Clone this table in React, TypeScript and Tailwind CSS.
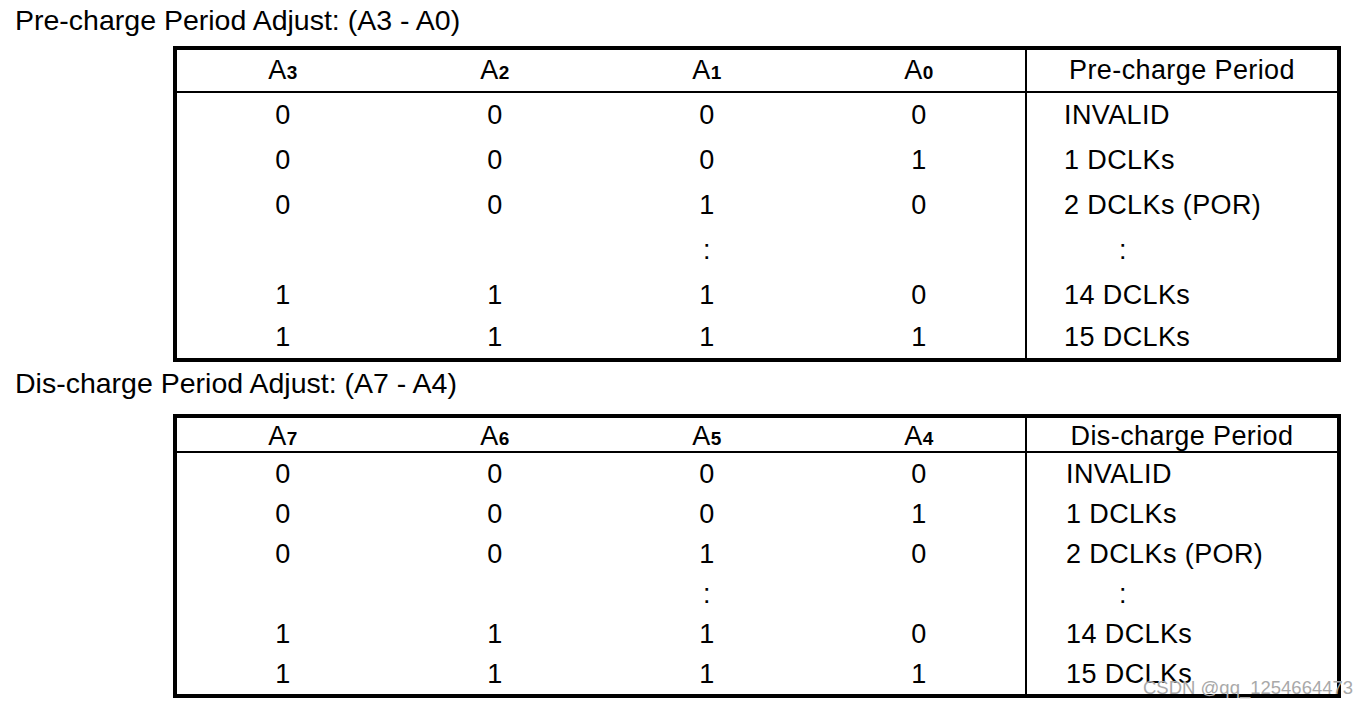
const font = { fontFamily: '"Liberation Sans", Arial, sans-serif' }

type Row = string[]

const rows: Row[] = [
  ['0', '0', '0', '0', 'INVALID'],
  ['0', '0', '0', '1', '1 DCLKs'],
  ['0', '0', '1', '0', '2 DCLKs (POR)'],
  ['', '', ':', '', ':'],
  ['1', '1', '1', '0', '14 DCLKs'],
  ['1', '1', '1', '1', '15 DCLKs'],
]

const Bit = ({ n }: { n: string }) => (
  <span>
    A<span className="text-[19px] font-bold">{n}</span>
  </span>
)

const c4Pad = (txt: string, pad: string) => (txt === ':' ? 'pl-[92px]' : pad)

const PeriodTable = ({
  bits,
  label,
  headH,
  rowHs,
  textPad,
  rowPad,
}: {
  bits: string[]
  label: string
  headH: string
  rowHs: string[]
  textPad: string
  rowPad: string
}) => (
  <div className="ml-[173px] w-[1168px] border-4 border-black">
    {/* header */}
    <div className={`grid grid-cols-[212px_212px_212px_212px_1fr] border-b-2 border-black ${headH}`}>
      {bits.map((b) => (
        <div key={b} className={`flex items-center justify-center ${rowPad}`}>
          <Bit n={b} />
        </div>
      ))}
      <div className={`flex items-center justify-center border-l-2 border-black ${rowPad}`}>{label}</div>
    </div>

    {/* body */}
    {rows.map((r, i) => (
      <div key={i} className={`grid grid-cols-[212px_212px_212px_212px_1fr] ${rowHs[i]}`}>
        {r.slice(0, 4).map((c, j) => (
          <div key={j} className={`flex items-center justify-center ${rowPad}`}>
            {c}
          </div>
        ))}
        <div className={`flex items-center border-l-2 border-black ${rowPad} ${c4Pad(r[4], textPad)}`}>{r[4]}</div>
      </div>
    ))}
  </div>
)

export default function App() {
  return (
    <div
      className="relative w-[1368px] h-[707px] overflow-hidden bg-white text-black text-[27px] leading-[1.15] tracking-[0.4px]"
      style={font}
    >
      <div className="pl-[15px] pt-[4px] text-[28.5px] leading-[32px] tracking-normal">
        Pre-charge Period Adjust: (A3 - A0)
      </div>
      <div className="mt-[10px]">
        <PeriodTable
          bits={['3', '2', '1', '0']}
          label="Pre-charge Period"
          headH="h-[43px]"
          rowHs={['h-[45px]', 'h-[45px]', 'h-[45px]', 'h-[45px]', 'h-[45px]', 'h-[40px]']}
          textPad="pl-[37px]"
          rowPad="pt-0"
        />
      </div>

      <div className="pl-[15px] pt-[5px] text-[28.5px] leading-[32px] tracking-normal">
        Dis-charge Period Adjust: (A7 - A4)
      </div>
      <div className="mt-[15px]">
        <PeriodTable
          bits={['7', '6', '5', '4']}
          label="Dis-charge Period"
          headH="h-[35px]"
          rowHs={['h-[40px]', 'h-[40px]', 'h-[40px]', 'h-[40px]', 'h-[40px]', 'h-[41px]']}
          textPad="pl-[39px]"
          rowPad="pt-[3px]"
        />
      </div>

      {/* watermark */}
      <div className="absolute left-[1143px] top-[677px] text-[18.5px] leading-[22px] tracking-normal text-[#a9a9a9]">
        CSDN @qq_1254664473
      </div>
    </div>
  )
}
